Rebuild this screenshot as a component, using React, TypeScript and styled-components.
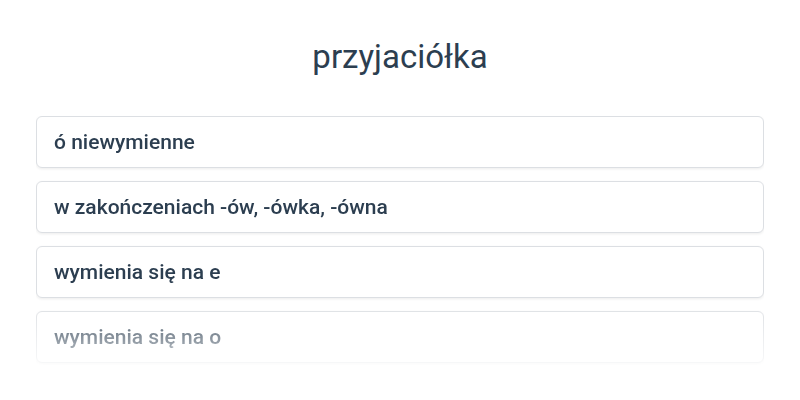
import React from "react";
import styled, { createGlobalStyle } from "styled-components";

const Global = createGlobalStyle`
  html, body { margin: 0; padding: 0; background: #ffffff; }
  body { font-family: Roboto, "Noto Sans", sans-serif; color: #2c3e50; }
`;

const Page = styled.div`
  width: 800px;
  height: 400px;
  box-sizing: border-box;
  padding: 34px 36px 0;
  display: flex;
  flex-direction: column;
  overflow: hidden;
`;

const Title = styled.h1`
  margin: 0;
  text-align: center;
  font-family: Roboto, sans-serif;
  font-weight: 400;
  font-size: 33px;
  line-height: 46px;
  color: #2c3e50;
`;

const List = styled.div`
  margin-top: 36px;
  display: flex;
  flex-direction: column;
  gap: 13px;
  height: 262px;
  padding: 0 0 4px;
  overflow: hidden;
  -webkit-mask-image: linear-gradient(to bottom, #000 0%, #000 70%, transparent 100%);
  mask-image: linear-gradient(to bottom, #000 0%, #000 70%, transparent 100%);
`;

const Card = styled.div`
  flex: none;
  height: 52px;
  box-sizing: border-box;
  border: 1px solid #dcdfe3;
  border-radius: 6px;
  box-shadow: 0 1px 3px rgba(0, 0, 0, 0.08);
  background: #fff;
  display: flex;
  align-items: center;
  padding: 0 17px;
  font-family: Roboto, sans-serif;
  font-weight: 500;
  font-size: 21px;
  color: #2c3e50;
`;

const options = [
  "ó niewymienne",
  "w zakończeniach -ów, -ówka, -ówna",
  "wymienia się na e",
  "wymienia się na o",
];

export default function App() {
  return (
    <>
      <Global />
      <Page>
        <Title>przyjaciółka</Title>
        <List>
          {options.map((o) => (
            <Card key={o}>{o}</Card>
          ))}
        </List>
      </Page>
    </>
  );
}
